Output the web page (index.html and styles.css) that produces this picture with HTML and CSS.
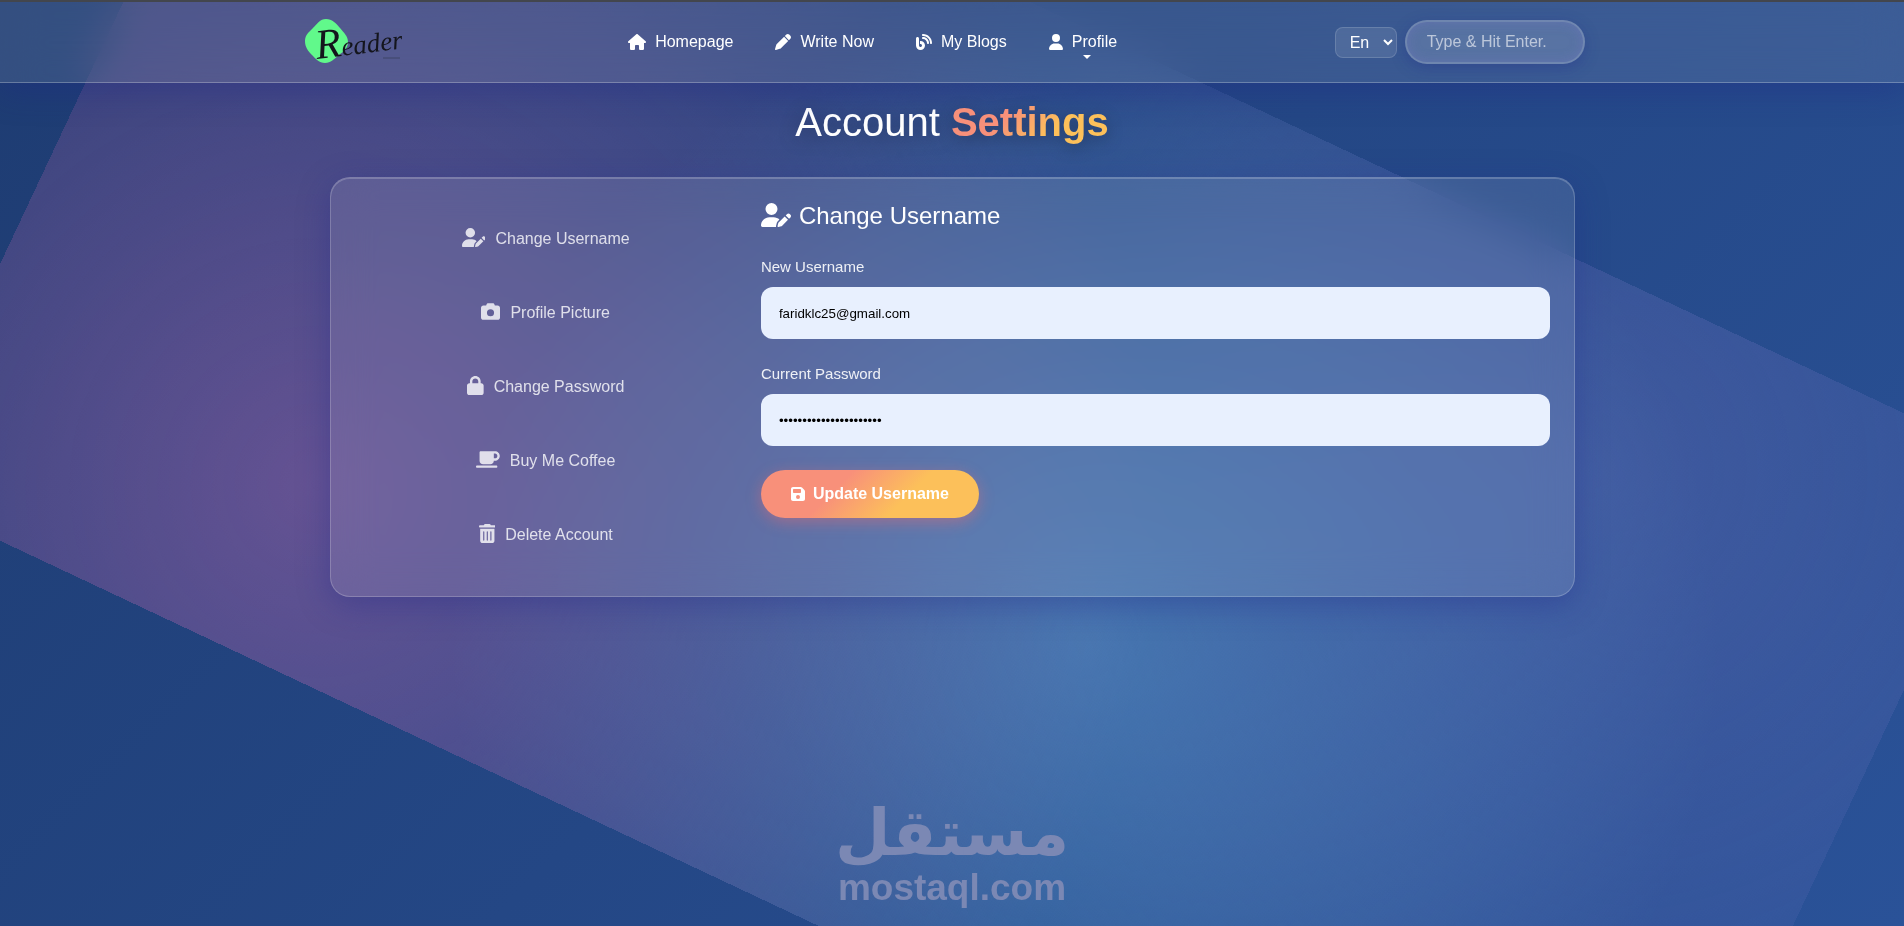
FILE: index.html
```html
<!DOCTYPE html>
<html lang="en">
<head>
    <meta charset="UTF-8">
    <meta name="viewport" content="width=device-width, initial-scale=1.0">
    <title>Account Settings</title>
    <link rel="stylesheet" href="styles.css">
</head>
<body>

<header class="header">
    <div class="header-inner">
        <a href="#" class="logo" aria-label="Reader">
            <svg width="100" height="60" viewBox="0 0 100 60">
                <path class="logo-blob" d="M21 7c6 0 10 4 14 9s8 8 8 14-4 9-9 13-8 8-14 8-9-4-13-8-7-8-7-14 4-9 8-13 7-9 13-9z"/>
                <text class="logo-text" x="12" y="47" transform="rotate(-7 12 47)"><tspan class="logo-initial">R</tspan>eader</text>
                <path class="logo-line" d="M78 46h17"/>
            </svg>
        </a>

        <nav class="nav">
            <a href="#" class="nav-link">
                <svg class="icon" viewBox="0 0 576 512"><path d="M575.8 255.5c0 18-15 32.1-32 32.1l-32 0 .7 160.2c0 2.7-.2 5.4-.5 8.1l0 16.2c0 22.1-17.9 40-40 40l-16 0c-1.1 0-2.2 0-3.3-.1c-1.4 .1-2.8 .1-4.2 .1L416 512l-24 0c-22.1 0-40-17.9-40-40l0-24 0-64c0-17.7-14.3-32-32-32l-64 0c-17.7 0-32 14.3-32 32l0 64 0 24c0 22.1-17.9 40-40 40l-24 0-31.9 0c-1.5 0-3-.1-4.5-.2c-1.2 .1-2.4 .2-3.6 .2l-16 0c-22.1 0-40-17.9-40-40l0-112c0-.9 0-1.9 .1-2.8l0-69.7-32 0c-18 0-32-14-32-32.1c0-9 3-17 10-24L266.4 8c7-7 15-8 22-8s15 2 21 7L564.8 231.5c8 7 12 15 11 24z"/></svg>
                Homepage
            </a>
            <a href="#" class="nav-link">
                <svg class="icon" viewBox="0 0 512 512"><path d="M362.7 19.3L314.3 67.7 444.3 197.7l48.4-48.4c25-25 25-65.5 0-90.5L453.3 19.3c-25-25-65.5-25-90.5 0zm-71 71L58.6 323.5c-10.4 10.4-18 23.3-22.2 37.4L1 481.2C-1.5 489.7 .8 498.8 7 505s15.3 8.5 23.7 6.1l120.3-35.4c14.1-4.2 27-11.8 37.4-22.2L421.7 220.3 291.7 90.3z"/></svg>
                Write Now
            </a>
            <a href="#" class="nav-link">
                <svg class="icon" viewBox="0 0 512 512"><path d="M192 32c0 17.7 14.3 32 32 32c123.7 0 224 100.3 224 224c0 17.7 14.3 32 32 32s32-14.3 32-32C512 128.9 383.1 0 224 0c-17.7 0-32 14.3-32 32zm0 96c0 17.7 14.3 32 32 32c70.7 0 128 57.3 128 128c0 17.7 14.3 32 32 32s32-14.3 32-32c0-106-86-192-192-192c-17.7 0-32 14.3-32 32zM96 144c0-26.5-21.5-48-48-48S0 117.5 0 144L0 368c0 79.5 64.5 144 144 144s144-64.5 144-144s-64.5-144-144-144l-16 0 0 96 16 0c26.5 0 48 21.5 48 48s-21.5 48-48 48s-48-21.5-48-48l0-224z"/></svg>
                My Blogs
            </a>
            <a href="#" class="nav-link has-menu">
                <svg class="icon" viewBox="0 0 448 512"><path d="M224 256A128 128 0 1 0 224 0a128 128 0 1 0 0 256zm-45.7 48C79.8 304 0 383.8 0 482.3C0 498.7 13.3 512 29.7 512l388.6 0c16.4 0 29.7-13.3 29.7-29.7C448 383.8 368.2 304 269.7 304l-91.4 0z"/></svg>
                Profile
            </a>
        </nav>

        <div class="tools">
            <select class="language" aria-label="Language">
                <option>En</option>
                <option>Ar</option>
            </select>
            <input type="search" class="search" aria-label="Search" placeholder="Type &amp; Hit Enter.">
        </div>
    </div>
</header>

<main class="main">
    <h1 class="title">Account <span class="highlight">Settings</span></h1>

    <div class="card">
        <nav class="sidebar">
            <a href="#" class="side-link">
                <svg class="icon" viewBox="0 0 640 512"><path d="M224 256A128 128 0 1 0 224 0a128 128 0 1 0 0 256zm-45.7 48C79.8 304 0 383.8 0 482.3C0 498.7 13.3 512 29.7 512l293.1 0c-3.1-8.8-3.7-18.4-1.4-27.8l15-60.1c2.8-11.3 8.6-21.5 16.8-29.7l40.3-40.3c-32.1-31-75.7-50.1-123.9-50.1l-91.3 0zm435.5-68.3c-15.6-15.6-40.9-15.6-56.6 0l-29.4 29.4 71 71 29.4-29.4c15.6-15.6 15.6-40.9 0-56.6l-14.4-14.4zM375.9 417c-4.1 4.1-7 9.2-8.4 14.9l-15 60.1c-1.4 5.5 .2 11.2 4.2 15.2s9.7 5.6 15.2 4.2l60.1-15c5.6-1.4 10.8-4.3 14.9-8.4L576.1 358.7l-71-71L375.9 417z"/></svg>
                Change Username
            </a>
            <a href="#" class="side-link">
                <svg class="icon" viewBox="0 0 512 512"><path d="M149.1 64.8L138.7 96 64 96C28.7 96 0 124.7 0 160L0 416c0 35.3 28.7 64 64 64l384 0c35.3 0 64-28.7 64-64l0-256c0-35.3-28.7-64-64-64l-74.7 0L362.9 64.8C356.4 45.2 338.1 32 317.4 32L194.6 32c-20.7 0-39 13.2-45.5 32.8zM256 192a96 96 0 1 1 0 192 96 96 0 1 1 0-192z"/></svg>
                Profile Picture
            </a>
            <a href="#" class="side-link">
                <svg class="icon" viewBox="0 0 448 512"><path d="M144 144l0 48 160 0 0-48c0-44.2-35.8-80-80-80s-80 35.8-80 80zM80 192l0-48C80 64.5 144.5 0 224 0s144 64.5 144 144l0 48 16 0c35.3 0 64 28.7 64 64l0 192c0 35.3-28.7 64-64 64L64 512c-35.3 0-64-28.7-64-64L0 256c0-35.3 28.7-64 64-64l16 0z"/></svg>
                Change Password
            </a>
            <a href="#" class="side-link">
                <svg class="icon" viewBox="0 0 640 512"><path d="M96 64c0-17.7 14.3-32 32-32l320 0 64 0c70.7 0 128 57.3 128 128s-57.3 128-128 128l-32 0c0 53-43 96-96 96l-192 0c-53 0-96-43-96-96L96 64zM480 224l32 0c35.3 0 64-28.7 64-64s-28.7-64-64-64l-32 0 0 128zM32 416l512 0c17.7 0 32 14.3 32 32s-14.3 32-32 32L32 480c-17.7 0-32-14.3-32-32s14.3-32 32-32z"/></svg>
                Buy Me Coffee
            </a>
            <a href="#" class="side-link">
                <svg class="icon" viewBox="0 0 448 512"><path d="M135.2 17.7C140.6 6.8 151.7 0 163.8 0L284.2 0c12.1 0 23.2 6.8 28.6 17.7L320 32l96 0c17.7 0 32 14.3 32 32s-14.3 32-32 32L32 96C14.3 96 0 81.7 0 64S14.3 32 32 32l96 0 7.2-14.3zM32 128l384 0 0 320c0 35.3-28.7 64-64 64L96 512c-35.3 0-64-28.7-64-64l0-320zm96 64c-8.8 0-16 7.2-16 16l0 224c0 8.8 7.2 16 16 16s16-7.2 16-16l0-224c0-8.8-7.2-16-16-16zm96 0c-8.8 0-16 7.2-16 16l0 224c0 8.8 7.2 16 16 16s16-7.2 16-16l0-224c0-8.8-7.2-16-16-16zm96 0c-8.8 0-16 7.2-16 16l0 224c0 8.8 7.2 16 16 16s16-7.2 16-16l0-224c0-8.8-7.2-16-16-16z"/></svg>
                Delete Account
            </a>
        </nav>

        <form class="form">
            <h2 class="form-title">
                <svg class="icon" viewBox="0 0 640 512"><path d="M224 256A128 128 0 1 0 224 0a128 128 0 1 0 0 256zm-45.7 48C79.8 304 0 383.8 0 482.3C0 498.7 13.3 512 29.7 512l293.1 0c-3.1-8.8-3.7-18.4-1.4-27.8l15-60.1c2.8-11.3 8.6-21.5 16.8-29.7l40.3-40.3c-32.1-31-75.7-50.1-123.9-50.1l-91.3 0zm435.5-68.3c-15.6-15.6-40.9-15.6-56.6 0l-29.4 29.4 71 71 29.4-29.4c15.6-15.6 15.6-40.9 0-56.6l-14.4-14.4zM375.9 417c-4.1 4.1-7 9.2-8.4 14.9l-15 60.1c-1.4 5.5 .2 11.2 4.2 15.2s9.7 5.6 15.2 4.2l60.1-15c5.6-1.4 10.8-4.3 14.9-8.4L576.1 358.7l-71-71L375.9 417z"/></svg>
                Change Username
            </h2>
            <div class="field">
                <label for="username">New Username</label>
                <input type="text" id="username" value="faridklc25@gmail.com">
            </div>
            <div class="field">
                <label for="password">Current Password</label>
                <input type="password" id="password" value="currentpassword1234567">
            </div>
            <button type="button" class="button">
                <svg class="icon" viewBox="0 0 448 512"><path d="M64 32C28.7 32 0 60.7 0 96L0 416c0 35.3 28.7 64 64 64l320 0c35.3 0 64-28.7 64-64l0-242.7c0-17-6.7-33.3-18.7-45.3L352 50.7C340 38.7 323.7 32 306.7 32L64 32zm0 96c0-17.7 14.3-32 32-32l192 0c17.7 0 32 14.3 32 32l0 64c0 17.7-14.3 32-32 32L96 224c-17.7 0-32-14.3-32-32l0-64zM224 288a64 64 0 1 1 0 128 64 64 0 1 1 0-128z"/></svg>
                Update Username
            </button>
        </form>
    </div>
</main>

<div class="watermark">
    <span class="watermark-ar" lang="ar" dir="rtl">مستقل</span>
    <span class="watermark-en">mostaql.com</span>
</div>

</body>
</html>
```
FILE: styles.css
```css
* {
    box-sizing: border-box;
}

body {
    margin: 0;
    min-height: 100vh;
    font-family: "Liberation Sans", Arial, sans-serif;
    font-size: 16px;
    color: white;
    background: linear-gradient(135deg, #1e3c72 0%, #2a5298 100%) fixed;
    border-top: 2px solid #43464d;
    overflow-x: hidden;
}

body::before {
    content: "";
    position: fixed;
    inset: 0;
    z-index: -1;
    background:
        radial-gradient(circle at 20% 80%, rgba(255, 119, 198, 0.3) 0%, transparent 50%),
        radial-gradient(circle at 80% 20%, rgba(120, 119, 198, 0.3) 0%, transparent 50%),
        radial-gradient(circle at 60% 60%, rgba(120, 219, 255, 0.3) 0%, transparent 50%);
    transform: translateY(14px) rotate(25.2deg);
}

a {
    color: inherit;
    text-decoration: none;
}

.icon {
    height: 1em;
    fill: currentColor;
}

/* Header */
.header {
    padding-left: 16%;
    background: rgba(255, 255, 255, 0.1);
    backdrop-filter: blur(20px);
    border-bottom: 1px solid rgba(255, 255, 255, 0.25);
    box-shadow: 0 8px 32px rgba(31, 38, 135, 0.37);
}

.header-inner {
    display: flex;
    align-items: center;
    justify-content: space-between;
    max-width: 1280px;
    height: 80px;
}

.logo svg {
    display: block;
    overflow: visible;
}

.logo-blob {
    fill: #61f98b;
}

.logo-text {
    font-family: "Liberation Serif", serif;
    font-style: italic;
    font-size: 27px;
    fill: #14151c;
}

.logo-initial {
    font-size: 42px;
}

.logo-line {
    stroke: #3d4466;
    stroke-width: 1;
}

.nav {
    display: flex;
    gap: 42px;
    padding-left: 6px;
}

.nav-link {
    position: relative;
    display: flex;
    align-items: center;
    gap: 9px;
}

.has-menu::after {
    content: "";
    position: absolute;
    top: 100%;
    left: 50%;
    margin-top: 4px;
    border: 4px solid transparent;
    border-top-color: white;
    border-bottom: 0;
}

.tools {
    display: flex;
    align-items: center;
    gap: 8px;
}

.language {
    width: 62px;
    height: 31px;
    padding: 0 0 0 10px;
    font: inherit;
    color: white;
    background-color: rgba(255, 255, 255, 0.1);
    border: 1px solid rgba(255, 255, 255, 0.15);
    border-radius: 8px;
}

.language option {
    color: black;
}

.search {
    width: 180px;
    height: 44px;
    padding: 0 20px;
    font: inherit;
    color: white;
    background: rgba(255, 255, 255, 0.15);
    border: 2px solid rgba(255, 255, 255, 0.15);
    border-radius: 22px;
    box-shadow: 0 4px 15px rgba(31, 38, 135, 0.3), inset 0 0 12px rgba(120, 119, 198, 0.4);
}

.search::placeholder {
    color: rgba(255, 255, 255, 0.6);
}

/* Settings */
.main {
    width: 1245px;
    max-width: 94%;
    margin: 0 auto;
}

.title {
    margin: 15px 0 31px;
    font-size: 40px;
    line-height: 48px;
    font-weight: normal;
    text-align: center;
    text-shadow: 0 4px 20px rgba(0, 0, 0, 0.3);
}

.highlight {
    font-weight: bold;
    background: linear-gradient(135deg, #f8907a 35%, #fcc05a 65%);
    -webkit-background-clip: text;
    background-clip: text;
    color: transparent;
    text-shadow: none;
    filter: drop-shadow(0 4px 8px rgba(0, 0, 0, 0.3));
}

.card {
    display: flex;
    gap: 24px;
    padding: 24px;
    background: rgba(255, 255, 255, 0.1);
    backdrop-filter: blur(20px);
    border: 1px solid rgba(255, 255, 255, 0.2);
    border-radius: 20px;
    box-shadow: 0 8px 32px rgba(31, 38, 135, 0.37), inset 0 1px 0 rgba(255, 255, 255, 0.2);
}

.sidebar {
    flex: 0 0 32%;
}

.side-link {
    display: flex;
    align-items: center;
    justify-content: center;
    gap: 10px;
    height: 74px;
    color: rgba(255, 255, 255, 0.8);
}

.side-link .icon {
    height: 19px;
    margin-bottom: 3px;
}

.form {
    flex: 1;
}

.form-title {
    display: flex;
    align-items: center;
    gap: 8px;
    margin: 0 0 26px;
    font-size: 24px;
    line-height: 28px;
    font-weight: normal;
}

.form-title .icon {
    margin-bottom: 3px;
}

.field {
    margin-bottom: 24px;
}

.field label {
    display: block;
    margin-bottom: 10px;
    font-size: 15px;
    line-height: 21px;
    color: rgba(255, 255, 255, 0.9);
}

.field input {
    display: block;
    width: 100%;
    height: 52px;
    padding: 0 18px;
    font-family: inherit;
    color: black;
    background: #e8f0fe;
    border: 0;
    border-radius: 12px;
}

.button {
    display: flex;
    align-items: center;
    gap: 8px;
    height: 48px;
    padding: 0 30px;
    font: inherit;
    font-weight: bold;
    color: white;
    background: linear-gradient(135deg, #f8907a 35%, #fcc05a 65%);
    border: 0;
    border-radius: 24px;
    box-shadow: 0 4px 15px rgba(255, 107, 107, 0.4);
    cursor: pointer;
}

/* Watermark over the page */
.watermark {
    position: fixed;
    left: 0;
    right: 0;
    bottom: 18px;
    display: flex;
    flex-direction: column;
    align-items: center;
    font-weight: bold;
    color: #7b88b4;
    pointer-events: none;
}

.watermark-ar {
    font-family: "DejaVu Sans", sans-serif;
    font-size: 64px;
    line-height: 70px;
}

.watermark-en {
    font-size: 37px;
    line-height: 40px;
}
```
